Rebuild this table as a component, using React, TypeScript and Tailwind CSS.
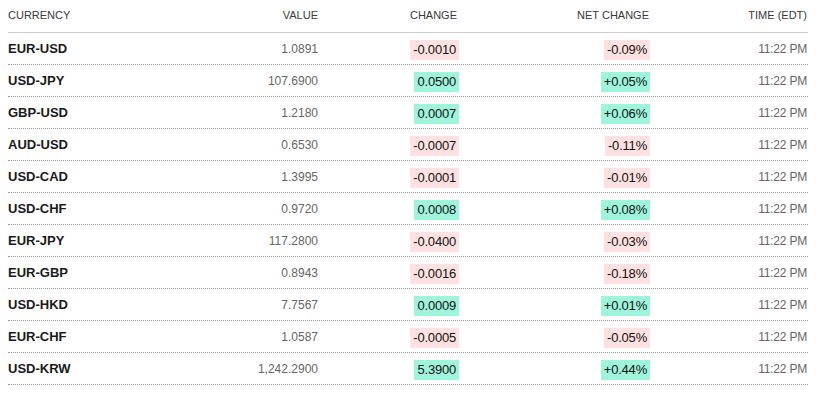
const rows = [
  { pair: 'EUR-USD', value: '1.0891', change: '-0.0010', net: '-0.09%' },
  { pair: 'USD-JPY', value: '107.6900', change: '0.0500', net: '+0.05%' },
  { pair: 'GBP-USD', value: '1.2180', change: '0.0007', net: '+0.06%' },
  { pair: 'AUD-USD', value: '0.6530', change: '-0.0007', net: '-0.11%' },
  { pair: 'USD-CAD', value: '1.3995', change: '-0.0001', net: '-0.01%' },
  { pair: 'USD-CHF', value: '0.9720', change: '0.0008', net: '+0.08%' },
  { pair: 'EUR-JPY', value: '117.2800', change: '-0.0400', net: '-0.03%' },
  { pair: 'EUR-GBP', value: '0.8943', change: '-0.0016', net: '-0.18%' },
  { pair: 'USD-HKD', value: '7.7567', change: '0.0009', net: '+0.01%' },
  { pair: 'EUR-CHF', value: '1.0587', change: '-0.0005', net: '-0.05%' },
  { pair: 'USD-KRW', value: '1,242.2900', change: '5.3900', net: '+0.44%' },
];

const cols = 'grid w-[800px] grid-cols-[162px_149px_140px_191px_158px]';

function Badge({ text, up }: { text: string; up: boolean }) {
  return (
    <span className={`inline-block h-[20px] leading-[20px] px-[3px] text-[13px] tracking-[-0.2px] text-[#111] ${up ? 'bg-[#9ef5dc]' : 'bg-[#ffe1e1]'}`}>
      {text}
    </span>
  );
}

export default function App() {
  return (
    <div className="w-[820px] h-[394px] bg-white px-2 font-['Liberation_Sans',Arial,sans-serif]">
      <div className={`${cols} h-[33px] items-center border-b border-[#cccccc] text-[11px] text-[#3a3a3a] uppercase pb-px`}>
        <div>Currency</div>
        <div className="text-right pr-px">Value</div>
        <div className="text-right pr-[2px]">Change</div>
        <div className="text-right pr-px">Net Change</div>
        <div className="text-right pr-px">Time (EDT)</div>
      </div>
      {rows.map(r => {
        const up = !r.change.startsWith('-');
        return (
          <div key={r.pair} className={`${cols} h-[32px] items-center border-b border-dotted border-[#999999]`}>
            <div className="text-[13px] font-bold text-[#1a1a1a]">{r.pair}</div>
            <div className="text-right text-[12px] text-[#666666] pr-px">{r.value}</div>
            <div className="text-right"><Badge text={r.change} up={up} /></div>
            <div className="text-right"><Badge text={r.net} up={up} /></div>
            <div className="text-right text-[12px] tracking-[-0.2px] text-[#666666] pr-px">11:22 PM</div>
          </div>
        );
      })}
    </div>
  );
}
